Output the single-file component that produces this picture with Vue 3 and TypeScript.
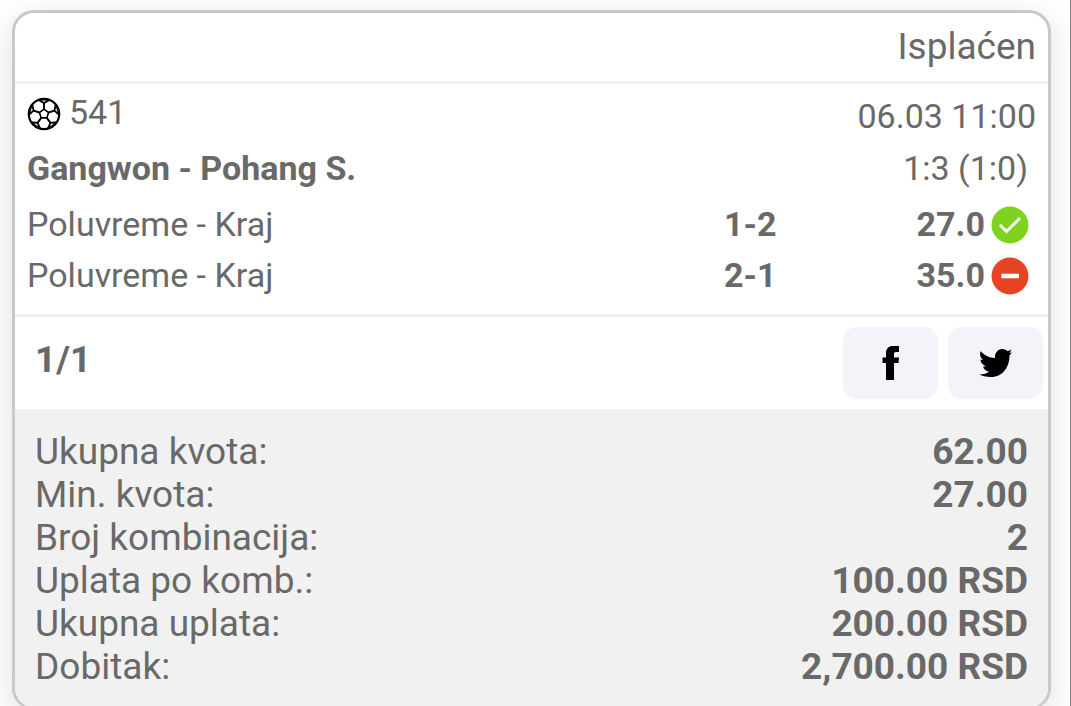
<script setup lang="ts">
interface Bet {
  market: string
  pick: string
  odds: string
  won: boolean
}

const bets: Bet[] = [
  { market: 'Poluvreme - Kraj', pick: '1-2', odds: '27.0', won: true },
  { market: 'Poluvreme - Kraj', pick: '2-1', odds: '35.0', won: false },
]

const totals: { label: string; value: string }[] = [
  { label: 'Ukupna kvota:', value: '62.00' },
  { label: 'Min. kvota:', value: '27.00' },
  { label: 'Broj kombinacija:', value: '2' },
  { label: 'Uplata po komb.:', value: '100.00 RSD' },
  { label: 'Ukupna uplata:', value: '200.00 RSD' },
  { label: 'Dobitak:', value: '2,700.00 RSD' },
]

const seamAngles = [0, 72, 144, 216, 288]
</script>

<template>
  <main class="page">
    <article class="ticket">
      <header class="status">Isplaćen</header>

      <section class="event">
        <div class="row meta">
          <div class="code">
            <svg class="ball" viewBox="-17 -17 34 34" aria-hidden="true">
              <circle r="15.2" fill="#fff" stroke="#000" stroke-width="2.2" />
              <path d="M0-4.8 4.6-1.500 2.800 3.900H-2.800L-4.600-1.500Z" fill="none" stroke="#000" stroke-width="1.6" />
              <g v-for="angle in seamAngles" :key="angle" :transform="`rotate(${angle})`">
                <path d="M0-4.8V-11" stroke="#000" stroke-width="1.9" />
                <path d="M0-10 6-13.300 5-15H-5L-6-13.300Z" fill="#000" />
                <path d="M-2.600-13.500H2.600L0-12Z" fill="#fff" />
              </g>
            </svg>
            <span>541</span>
          </div>
          <time class="time">06.03 11:00</time>
        </div>
        <div class="row match">
          <h1 class="teams">Gangwon - Pohang S.</h1>
          <span>1:3 (1:0)</span>
        </div>
        <div v-for="bet in bets" :key="bet.pick" class="bet">
          <span>{{ bet.market }}</span>
          <div class="result">
            <b>{{ bet.pick }}</b>
            <div class="odds">
              <b>{{ bet.odds }}</b>
              <svg v-if="bet.won" class="mark" viewBox="0 0 38 38" role="img" aria-label="Dobitan">
                <circle cx="19" cy="19" r="18.5" fill="#7ed321" />
                <path d="M9 19 15.500 25.500 29 12" fill="none" stroke="#fff" stroke-width="3" />
              </svg>
              <svg v-else class="mark" viewBox="0 0 38 38" role="img" aria-label="Gubitan">
                <circle cx="19" cy="19" r="18.5" fill="#e64425" />
                <path d="M10.500 19H28" stroke="#fff" stroke-width="4.500" />
              </svg>
            </div>
          </div>
        </div>
      </section>

      <section class="share">
        <b class="system">1/1</b>
        <div class="buttons">
          <button type="button" aria-label="Facebook">
            <svg class="glyph" viewBox="0 0 36 36" aria-hidden="true">
              <path d="M13 35V18H9.500V12.500H13V8.500C13 3.500 15.500 1 20 1H26V7H23C21.400 7 21 7.700 21 9V12.500H26L25.500 18H21V35Z" />
            </svg>
          </button>
          <button type="button" aria-label="Twitter">
            <svg class="glyph" viewBox="0 0 36 36" aria-hidden="true">
              <path d="M2.500 6C6 10 11 13 17 13C16.500 8 20 4 24 4C27 4 28.500 5 29.500 6.200L33.500 4.500L31.500 8L34 7.500L31.500 10.500C31.500 22 25 32 13 32C8 32 4 31 1.500 29.500C6 29.500 9 28.500 11 26.500C8 26 6 24.500 5 21.500L8 21.300C4.500 20 2.500 17.500 2.500 14.500L5 15.200C2 12.500 1.500 9.500 2.500 6Z" />
            </svg>
          </button>
        </div>
      </section>

      <dl class="totals">
        <div v-for="total in totals" :key="total.label" class="total">
          <dt>{{ total.label }}</dt>
          <dd>{{ total.value }}</dd>
        </div>
      </dl>
    </article>
  </main>
</template>

<style>
html,
body {
  overflow: hidden;
}
</style>

<style scoped>
.page {
  box-sizing: border-box;
  min-height: 100vh;
  padding: 10px 19px 10px 12px;
  border-right: 1px solid #858585;
  background: #fff;
  color: #696969;
  font-family: Roboto, sans-serif;
  font-size: 34px;
  line-height: 40px;
}

.ticket {
  overflow: hidden;
  border: 3px solid #c9c9c9;
  border-radius: 22px;
  background: #fff;
  box-shadow: 0 8px 32px rgba(0, 0, 0, 0.13);
}

.status {
  padding: 12px 12px 13px;
  border-bottom: 3px solid #f0f0f0;
  font-size: 37px;
  line-height: 43px;
  text-align: right;
}

.event {
  padding: 8px 12px;
  border-bottom: 3px solid #f0f0f0;
}

.row {
  display: flex;
  justify-content: space-between;
  height: 56px;
}

.code {
  display: flex;
  gap: 8px;
}

.ball {
  width: 34px;
  height: 34px;
  margin-top: 5px;
}

.time {
  padding-top: 4px;
}

.match {
  padding-right: 8px;
}

.teams {
  margin: 0;
  font-size: 34px;
  font-weight: 700;
}

.bet {
  display: grid;
  grid-template-columns: 16fr 7fr;
  height: 51px;
  padding-right: 7px;
}

.result {
  display: flex;
  justify-content: space-between;
}

.odds {
  display: flex;
  gap: 6px;
}

.mark {
  width: 38px;
  height: 38px;
  margin-top: 2px;
}

.share {
  display: flex;
  justify-content: space-between;
  padding: 10px 5px 10px 20px;
}

.system {
  padding-top: 11px;
  font-size: 37px;
  line-height: 43px;
}

.buttons {
  display: flex;
  gap: 10px;
}

.buttons button {
  display: flex;
  align-items: center;
  justify-content: center;
  width: 95px;
  height: 72px;
  padding: 0;
  border: 0;
  border-radius: 14px;
  background: #f3f4f9;
}

.glyph {
  width: 36px;
  height: 36px;
}

.totals {
  margin: 0;
  padding: 21px 20px 19px;
  background: #f1f1f1;
  font-size: 37px;
  line-height: 43px;
}

.total {
  display: flex;
  justify-content: space-between;
}

.total dd {
  margin: 0;
  font-weight: 700;
}
</style>
